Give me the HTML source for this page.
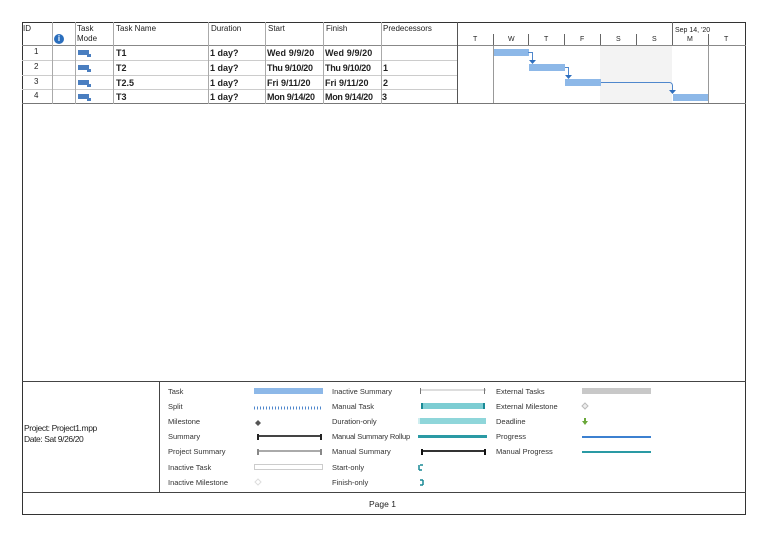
<!DOCTYPE html>
<html><head><meta charset="utf-8"><style>
*{margin:0;padding:0;box-sizing:border-box}
body{width:768px;height:537px;background:#fff;position:relative;font-family:"Liberation Sans",sans-serif;color:#222;overflow:hidden}
.a{position:absolute}
.t{position:absolute;font-size:8px;white-space:nowrap}
.b{font-weight:bold;font-size:9px}
.l{position:absolute;font-size:7.5px;color:#333;white-space:nowrap}
.vl{position:absolute;width:1px;background:#888}
.hl{position:absolute;height:1px;background:#999}
</style></head><body>
<div class="a" style="left:22px;top:22px;width:724px;height:493px;border:1px solid #333"></div>
<div class="hl" style="left:22px;top:45px;width:724px;background:#888"></div>
<div class="hl" style="left:22px;top:60px;width:435px;background:#ccc"></div>
<div class="hl" style="left:22px;top:75px;width:435px;background:#ccc"></div>
<div class="hl" style="left:22px;top:89px;width:435px;background:#ccc"></div>
<div class="hl" style="left:22px;top:103px;width:724px;background:#777"></div>
<div class="vl" style="left:52px;top:22px;height:82px;background:#aaa"></div>
<div class="vl" style="left:75px;top:22px;height:82px;background:#aaa"></div>
<div class="vl" style="left:113px;top:22px;height:82px;background:#aaa"></div>
<div class="vl" style="left:208px;top:22px;height:82px;background:#aaa"></div>
<div class="vl" style="left:265px;top:22px;height:82px;background:#aaa"></div>
<div class="vl" style="left:323px;top:22px;height:82px;background:#aaa"></div>
<div class="vl" style="left:381px;top:22px;height:82px;background:#aaa"></div>
<div class="vl" style="left:457px;top:22px;height:82px;background:#555"></div>
<div class="t" style="left:23px;top:24px">ID</div>
<div class="a" style="left:54px;top:34px;width:10px;height:10px;border-radius:50%;background:#2a6ebd;color:#fff;font-size:8px;font-weight:bold;text-align:center;line-height:10px">i</div>
<div class="t" style="left:77px;top:24px;line-height:10px">Task<br>Mode</div>
<div class="t" style="left:116px;top:24px">Task Name</div>
<div class="t" style="left:211px;top:24px">Duration</div>
<div class="t" style="left:268px;top:24px">Start</div>
<div class="t" style="left:326px;top:24px">Finish</div>
<div class="t" style="left:383px;top:24px">Predecessors</div>
<div class="t" style="left:34px;top:47px">1</div>
<div class="t" style="left:34px;top:62px">2</div>
<div class="t" style="left:34px;top:77px">3</div>
<div class="t" style="left:34px;top:91px">4</div>
<div class="a" style="left:78px;top:50px;width:11px;height:5px;background:#4a7ec0"></div><div class="a" style="left:87px;top:54px;width:4px;height:3px;background:#4a7ec0"></div>
<div class="a" style="left:78px;top:65px;width:11px;height:5px;background:#4a7ec0"></div><div class="a" style="left:87px;top:69px;width:4px;height:3px;background:#4a7ec0"></div>
<div class="a" style="left:78px;top:80px;width:11px;height:5px;background:#4a7ec0"></div><div class="a" style="left:87px;top:84px;width:4px;height:3px;background:#4a7ec0"></div>
<div class="a" style="left:78px;top:94px;width:11px;height:5px;background:#4a7ec0"></div><div class="a" style="left:87px;top:98px;width:4px;height:3px;background:#4a7ec0"></div>
<div class="t b" style="left:116px;top:48px">T1</div>
<div class="t b" style="left:116px;top:63px">T2</div>
<div class="t b" style="left:116px;top:78px">T2.5</div>
<div class="t b" style="left:116px;top:92px">T3</div>
<div class="t b" style="left:210px;top:48px">1 day?</div>
<div class="t b" style="left:210px;top:63px">1 day?</div>
<div class="t b" style="left:210px;top:78px">1 day?</div>
<div class="t b" style="left:210px;top:92px">1 day?</div>
<div class="t b" style="left:267px;top:48px;letter-spacing:.1px">Wed 9/9/20</div>
<div class="t b" style="left:267px;top:63px;letter-spacing:-.3px">Thu 9/10/20</div>
<div class="t b" style="left:267px;top:78px;letter-spacing:0">Fri 9/11/20</div>
<div class="t b" style="left:267px;top:92px;letter-spacing:-.3px">Mon 9/14/20</div>
<div class="t b" style="left:325px;top:48px;letter-spacing:.1px">Wed 9/9/20</div>
<div class="t b" style="left:325px;top:63px;letter-spacing:-.3px">Thu 9/10/20</div>
<div class="t b" style="left:325px;top:78px;letter-spacing:0">Fri 9/11/20</div>
<div class="t b" style="left:325px;top:92px;letter-spacing:-.3px">Mon 9/14/20</div>
<div class="t b" style="left:383px;top:63px">1</div>
<div class="t b" style="left:383px;top:78px">2</div>
<div class="t b" style="left:382px;top:92px">3</div>
<div class="a" style="left:600px;top:46px;width:72px;height:57px;background:#f3f3f3"></div>
<div class="vl" style="left:493px;top:46px;height:57px;background:#999"></div>
<div class="vl" style="left:708px;top:46px;height:57px;background:#999"></div>
<div class="vl" style="left:672px;top:22px;height:23px;background:#666"></div>
<div class="t" style="left:675px;top:27px;font-size:7px">Sep 14, '20</div>
<div class="a" style="left:493px;top:34px;width:1px;height:11px;background:#666"></div>
<div class="a" style="left:528px;top:34px;width:1px;height:11px;background:#666"></div>
<div class="a" style="left:564px;top:34px;width:1px;height:11px;background:#666"></div>
<div class="a" style="left:600px;top:34px;width:1px;height:11px;background:#666"></div>
<div class="a" style="left:636px;top:34px;width:1px;height:11px;background:#666"></div>
<div class="a" style="left:708px;top:34px;width:1px;height:11px;background:#666"></div>
<div class="t" style="left:473px;top:36px;font-size:7px">T</div>
<div class="t" style="left:508px;top:36px;font-size:7px">W</div>
<div class="t" style="left:544px;top:36px;font-size:7px">T</div>
<div class="t" style="left:580px;top:36px;font-size:7px">F</div>
<div class="t" style="left:616px;top:36px;font-size:7px">S</div>
<div class="t" style="left:652px;top:36px;font-size:7px">S</div>
<div class="t" style="left:687px;top:36px;font-size:7px">M</div>
<div class="t" style="left:724px;top:36px;font-size:7px">T</div>
<div class="a" style="left:494px;top:49px;width:35px;height:7px;background:#8db8e8"></div>
<div class="a" style="left:529px;top:64px;width:36px;height:7px;background:#8db8e8"></div>
<div class="a" style="left:565px;top:79px;width:36px;height:7px;background:#8db8e8"></div>
<div class="a" style="left:673px;top:94px;width:35px;height:7px;background:#8db8e8"></div>
<svg class="a" style="left:457px;top:46px" width="288" height="57">
<g fill="none" stroke="#4f87cc" stroke-width="1"><path d="M71 6.5H75.5V15"/><path d="M108 21.5H111.5V30"/><path d="M144 36.5H212.5a3 3 0 0 1 3 3V45"/></g>
<g fill="#2f6fbf"><path d="M72 14H79L75.5 18z"/><path d="M108 29H115L111.5 33z"/><path d="M212 44H219L215.5 48z"/></g>
</svg>
<div class="hl" style="left:22px;top:381px;width:724px;background:#444"></div>
<div class="vl" style="left:159px;top:381px;height:111px;background:#444"></div>
<div class="hl" style="left:22px;top:492px;width:724px;background:#444"></div>
<div class="t" style="left:24px;top:423px;font-size:8.5px;line-height:11px;letter-spacing:-.4px">Project: Project1.mpp<br>Date: Sat 9/26/20</div>
<div class="t" style="left:369px;top:499px;font-size:8.5px">Page 1</div>
<div class="l" style="left:168px;top:387px">Task</div>
<div class="l" style="left:168px;top:402px">Split</div>
<div class="l" style="left:168px;top:417px">Milestone</div>
<div class="l" style="left:168px;top:432px">Summary</div>
<div class="l" style="left:168px;top:447px">Project Summary</div>
<div class="l" style="left:168px;top:463px">Inactive Task</div>
<div class="l" style="left:168px;top:478px">Inactive Milestone</div>
<div class="l" style="left:332px;top:387px">Inactive Summary</div>
<div class="l" style="left:332px;top:402px">Manual Task</div>
<div class="l" style="left:332px;top:417px">Duration-only</div>
<div class="l" style="left:332px;top:432px;letter-spacing:-.2px">Manual Summary Rollup</div>
<div class="l" style="left:332px;top:447px">Manual Summary</div>
<div class="l" style="left:332px;top:463px">Start-only</div>
<div class="l" style="left:332px;top:478px">Finish-only</div>
<div class="l" style="left:496px;top:387px">External Tasks</div>
<div class="l" style="left:496px;top:402px">External Milestone</div>
<div class="l" style="left:496px;top:417px">Deadline</div>
<div class="l" style="left:496px;top:432px">Progress</div>
<div class="l" style="left:496px;top:447px">Manual Progress</div>
<svg class="a" style="left:0;top:0" width="768" height="537">
<rect x="254" y="388" width="69" height="6" fill="#8db8e8"/>
<line x1="254" y1="408" x2="323" y2="408" stroke="#4f87cc" stroke-width="3" stroke-dasharray="1 2"/>
<path d="M258 420l3 3-3 3-3-3z" fill="#555"/>
<rect x="258" y="435" width="64" height="2" fill="#444"/><rect x="257" y="434" width="2" height="6" fill="#222"/><rect x="320" y="434" width="2" height="6" fill="#222"/>
<rect x="258" y="450" width="64" height="2" fill="#aaa"/><rect x="257" y="449" width="2" height="6" fill="#888"/><rect x="320" y="449" width="2" height="6" fill="#888"/>
<rect x="254.5" y="464.5" width="68" height="5" fill="#fff" stroke="#ccc"/>
<path d="M258 479l3 3-3 3-3-3z" fill="#fff" stroke="#ddd"/>
<rect x="421" y="389" width="65" height="2" fill="#ddd"/><rect x="420" y="388" width="1" height="6" fill="#777"/><rect x="484" y="388" width="1" height="6" fill="#777"/>
<rect x="421" y="403" width="64" height="6" fill="#7dcdd3"/><rect x="421" y="403" width="2" height="6" fill="#1a8a96"/><rect x="483" y="403" width="2" height="6" fill="#1a8a96"/>
<rect x="418" y="418" width="68" height="6" fill="#8fd6da"/><rect x="418" y="418" width="2" height="6" fill="#cfeef0"/>
<rect x="418" y="435" width="69" height="3" fill="#2a9aa4"/>
<rect x="421" y="450" width="65" height="2" fill="#333"/><rect x="421" y="449" width="2" height="6" fill="#111"/><rect x="484" y="449" width="2" height="6" fill="#111"/>
<path d="M420 465h3M419 465v5M419 470h3" stroke="#1a8a96" stroke-width="1.5" fill="none"/>
<path d="M420 480h3M423 480v5M420 485h3" stroke="#1a8a96" stroke-width="1.5" fill="none"/>
<rect x="582" y="388" width="69" height="6" fill="#c8c8c8"/>
<path d="M585 403l3 3-3 3-3-3z" fill="#eee" stroke="#bbb"/>
<path d="M584 418h2v3h2l-3 4-3-4h2z" fill="#6aa83a"/>
<rect x="582" y="436" width="69" height="2" fill="#3c80d0"/>
<rect x="582" y="451" width="69" height="2" fill="#2a9aa4"/>
</svg>
</body></html>
